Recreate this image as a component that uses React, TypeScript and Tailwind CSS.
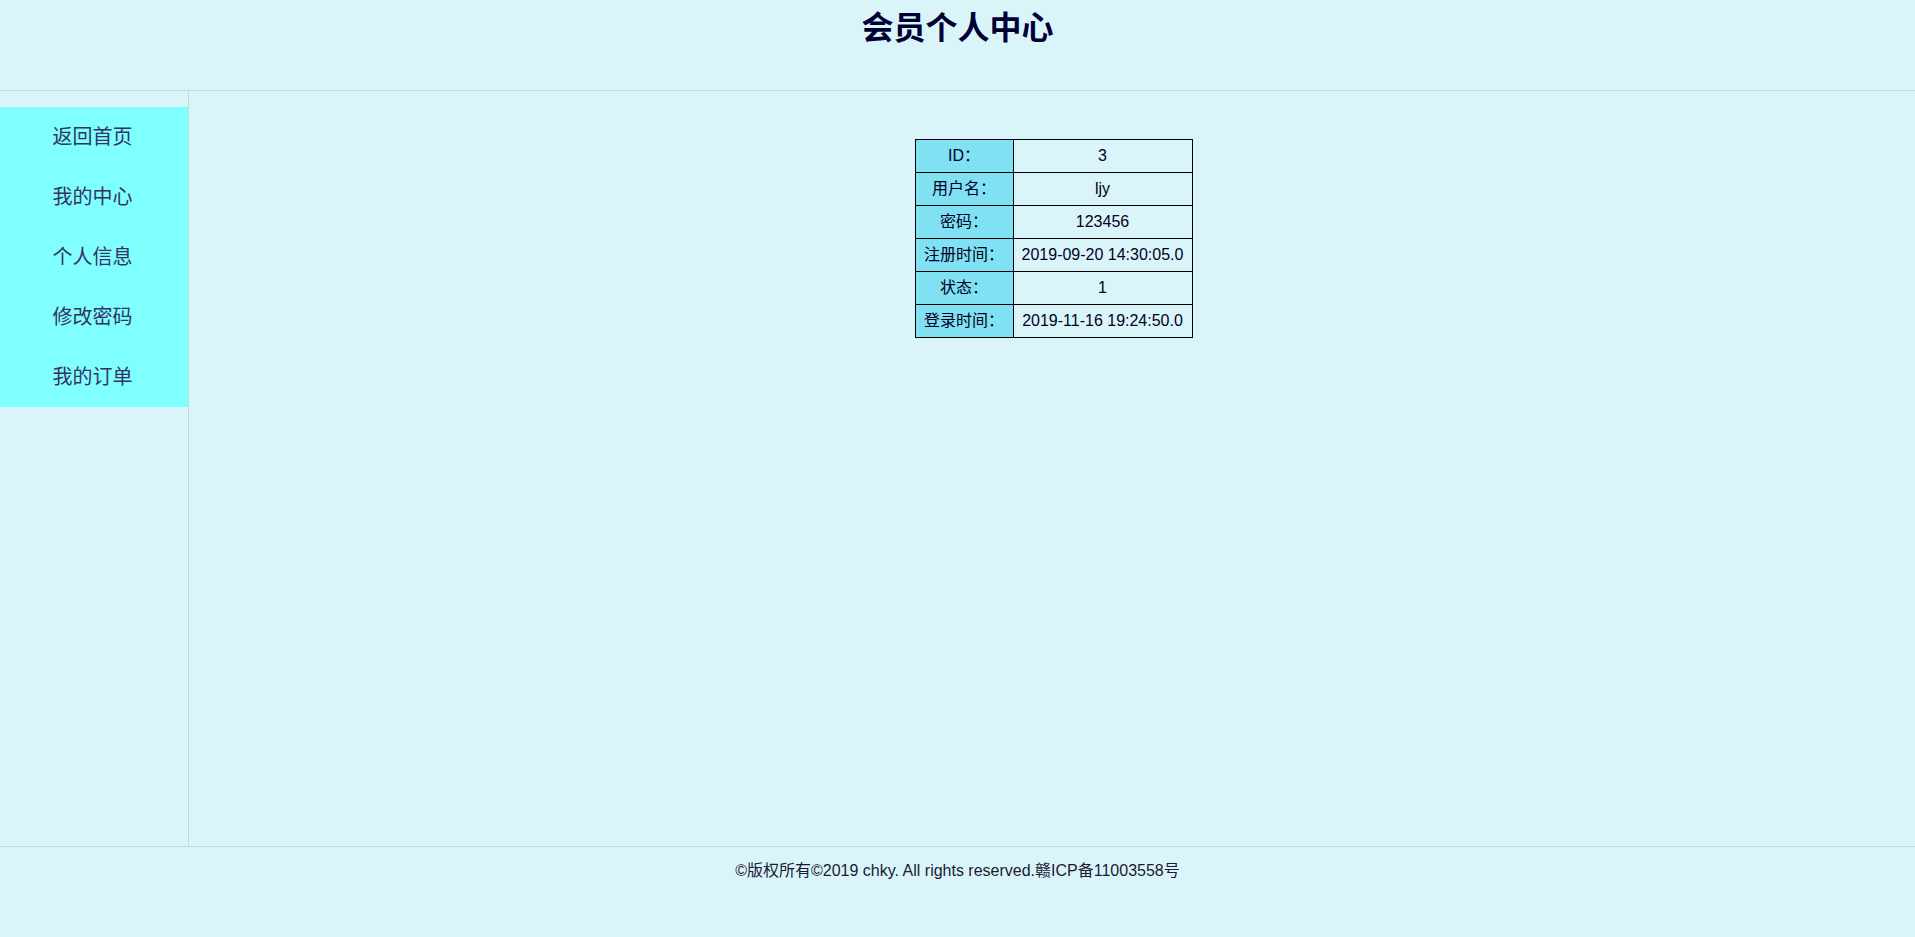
const rows: [string, string][] = [
  ["ID：", "3"],
  ["用户名：", "ljy"],
  ["密码：", "123456"],
  ["注册时间：", "2019-09-20 14:30:05.0"],
  ["状态：", "1"],
  ["登录时间：", "2019-11-16 19:24:50.0"],
];

const menu = ["返回首页", "我的中心", "个人信息", "修改密码", "我的订单"];

export default function App() {
  return (
    <div className="flex h-[937px] flex-col bg-[#daf5fa] font-['Liberation_Sans','Noto_Sans_CJK_SC',sans-serif]">
      <header className="h-[91px] shrink-0 border-b border-[#bcdce3] pt-[10px] text-center">
        <h1 className="text-[32px] font-bold leading-9 text-[#000033]">会员个人中心</h1>
      </header>

      <div className="flex h-[755px] shrink-0">
        <aside className="w-[189px] shrink-0 border-r border-[#bcdce3] pt-4">
          <ul className="bg-[#80ffff] pr-[3px]">
            {menu.map((m) => (
              <li key={m} className="flex h-[60px] items-center justify-center text-[20px] text-[#333366]">
                {m}
              </li>
            ))}
          </ul>
        </aside>

        <main className="flex flex-1 justify-center pl-[3px] pt-[48px]">
          <table className="h-fit border-collapse border border-black text-[16px] text-[#000022]">
            <tbody>
              {rows.map(([k, v]) => (
                <tr key={k} className="h-[33px]">
                  <td className="w-[98px] whitespace-nowrap border border-black bg-[#80e1f2] text-center">{k}</td>
                  <td className="w-[179px] border border-black text-center">{v}</td>
                </tr>
              ))}
            </tbody>
          </table>
        </main>
      </div>

      <footer className="flex-1 border-t border-[#bcdce3] pt-[12px] text-center text-[16px] text-[#1a1a33]">
        ©版权所有©2019 chky. All rights reserved.赣ICP备11003558号
      </footer>
    </div>
  );
}
